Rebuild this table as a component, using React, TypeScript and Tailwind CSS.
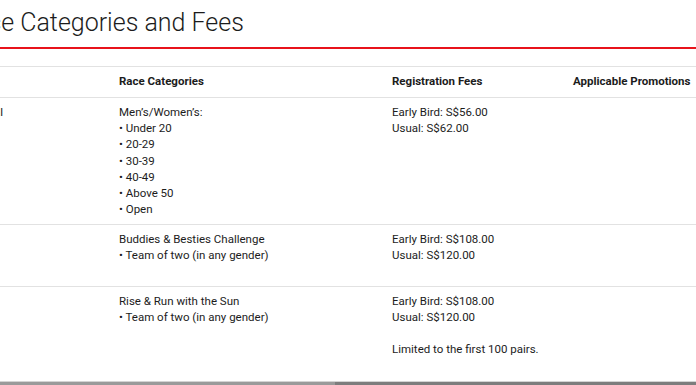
const rows = [
  {
    event: ["Individual"],
    categories: ["Men’s/Women’s:", "• Under 20", "• 20-29", "• 30-39", "• 40-49", "• Above 50", "• Open"],
    fees: [["Early Bird: S$56.00", "Usual: S$62.00"]],
    height: "h-[127px]",
  },
  {
    event: ["Duo"],
    categories: ["Buddies & Besties Challenge", "• Team of two (in any gender)"],
    fees: [["Early Bird: S$108.00", "Usual: S$120.00"]],
    height: "h-[62px]",
  },
  {
    event: ["Duo"],
    categories: ["Rise & Run with the Sun", "• Team of two (in any gender)"],
    fees: [["Early Bird: S$108.00", "Usual: S$120.00"], ["Limited to the first 100 pairs."]],
    height: "h-[94px]",
  },
];

function Lines({ lines }: { lines: string[] }) {
  return (
    <div>
      {lines.map((l, i) => (
        <div key={i}>{l}</div>
      ))}
    </div>
  );
}

export default function App() {
  return (
    <div className="w-[696px] h-[385px] overflow-hidden bg-white text-[#1c1c1c] font-['Roboto',sans-serif] flex flex-col">
      <div className="-ml-[41px] pt-[6px] h-[48px] text-[25px] font-light leading-[33px] whitespace-nowrap">
        Race Categories and Fees
      </div>
      <div className="h-[2px] bg-[#e8131b]" />
      <div className="mt-[17px] border-t border-[#e2e2e2] -ml-[46px] text-[11.5px] leading-[16.2px]">
        <div className="grid grid-cols-[165px_273px_181px_1fr] h-[31px] pt-[6px] border-b border-[#e2e2e2] font-bold whitespace-nowrap">
          <div>Event</div>
          <div>Race Categories</div>
          <div>Registration Fees</div>
          <div>Applicable Promotions</div>
        </div>
        {rows.map((r, i) => (
          <div
            key={i}
            className={`grid grid-cols-[165px_273px_181px_1fr] pt-[6px] whitespace-nowrap ${r.height} ${
              i < rows.length - 1 ? "border-b border-[#e2e2e2]" : ""
            }`}
          >
            <Lines lines={r.event} />
            <Lines lines={r.categories} />
            <div className="flex flex-col gap-[16px]">
              {r.fees.map((f, j) => (
                <Lines key={j} lines={f} />
              ))}
            </div>
            <div />
          </div>
        ))}
      </div>
      <div className="mt-auto flex flex-col">
        <div className="h-px bg-[#d4d4d4]" />
        <div className="flex h-[3px]">
          <div className="w-[335px] bg-[#9a9a9a]" />
          <div className="flex-1 bg-[#7d7d7d]" />
        </div>
      </div>
    </div>
  );
}
